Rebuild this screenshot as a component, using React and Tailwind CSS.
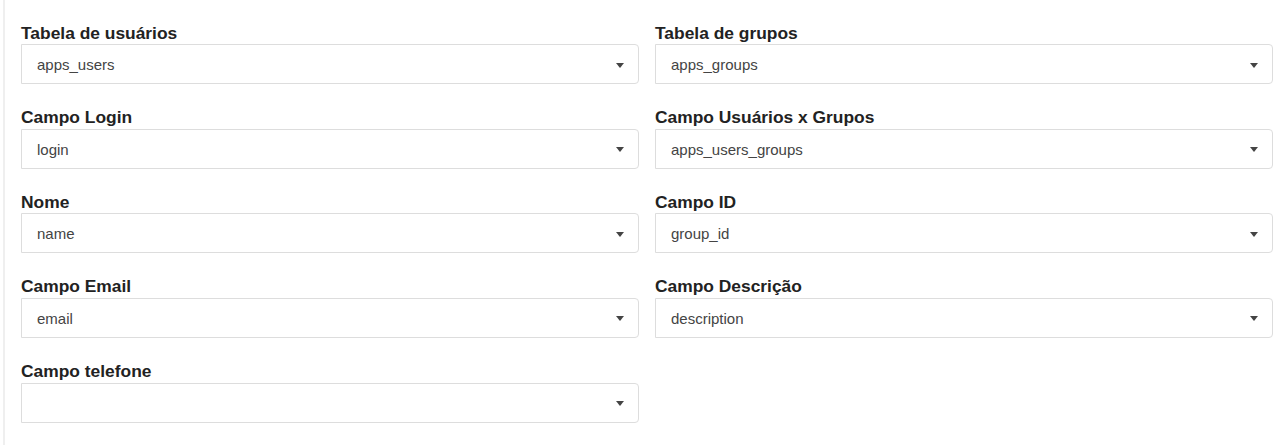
import React from "react";

const left = [
  ["Tabela de usuários", "apps_users"],
  ["Campo Login", "login"],
  ["Nome", "name"],
  ["Campo Email", "email"],
  ["Campo telefone", ""],
];
const right = [
  ["Tabela de grupos", "apps_groups"],
  ["Campo Usuários x Grupos", "apps_users_groups"],
  ["Campo ID", "group_id"],
  ["Campo Descrição", "description"],
];

function Field({ label, value }) {
  return (
    <div className="flex flex-col">
      <div className="pt-[1px] text-[17.4px] font-bold leading-[21.6px] text-[#222222]">{label}</div>
      <div className="flex h-[40px] items-center justify-between rounded-r-[4px] border border-[#dddddd] bg-white pl-[15px] pr-[14px] pt-[2px]">
        <span className="text-[15px] text-[#444444]">{value}</span>
        <span className="h-0 w-0 border-x-[4px] border-t-[5px] border-x-transparent border-t-[#444444]" />
      </div>
    </div>
  );
}

export default function App() {
  return (
    <div className="flex h-[445px] w-[1279px] bg-white" style={{ fontFamily: '"Liberation Sans", Arial, sans-serif' }}>
      <div className="ml-[3px] w-[2px] bg-[#efefef]" />
      <div className="grid flex-1 grid-cols-2 content-start gap-x-[16px] pl-[16px] pr-[6px] pt-[21.6px]">
        <div className="flex flex-col gap-[22px]">
          {left.map(([l, v]) => (
            <Field key={l} label={l} value={v} />
          ))}
        </div>
        <div className="flex flex-col gap-[22px]">
          {right.map(([l, v]) => (
            <Field key={l} label={l} value={v} />
          ))}
        </div>
      </div>
    </div>
  );
}
